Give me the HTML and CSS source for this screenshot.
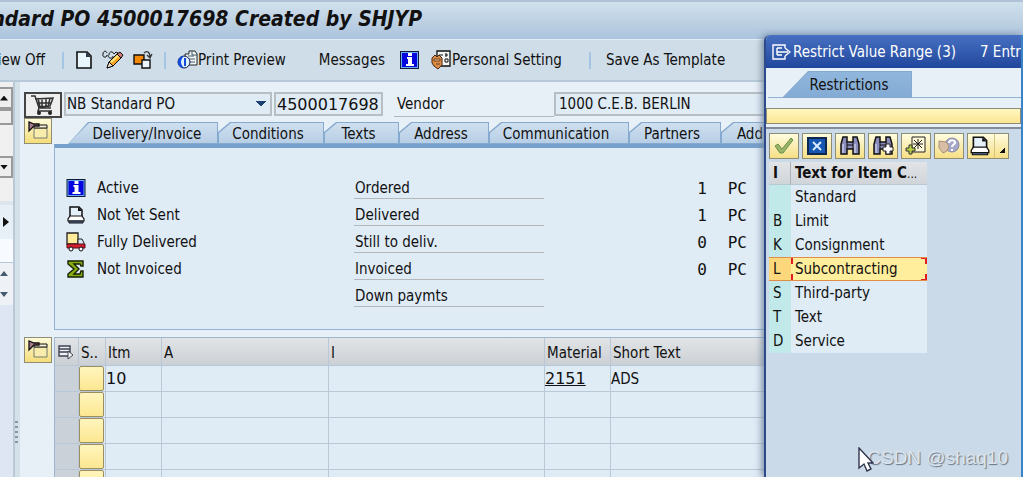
FILE: index.html
```html
<!DOCTYPE html>
<html lang="en">

<head>
    <meta charset="UTF-8">
    <meta name="viewport" content="width=device-width, initial-scale=1.0">
    <title>Standard PO 4500017698</title>
    <link rel="stylesheet" href="styles.css">
</head>

<body>
    <!-- shared icons -->
    <svg class="sprite" aria-hidden="true">
        <symbol id="icon-info" viewBox="0 0 19 18">
            <path d="M0 0h19v18H0z" fill="#111a3a" />
            <path d="M1 1h17v16H1z" fill="#6ab0ee" />
            <path d="M2 2h15v14H2z" fill="#0505dd" />
            <path d="M8 2h4v3H8zM7 6h5v7h2v2H6v-2h2V8H7z" fill="#fff" />
        </symbol>
        <symbol id="icon-printer" viewBox="0 0 20 20">
            <path d="M4 12V2h9l3 3v7" fill="#e4f1fa" stroke="#111" stroke-width="1.5" />
            <path d="M12 2v4h4" fill="#111" />
            <path d="M4 11h12l2 3v2H2v-2z" fill="#fff" stroke="#111" stroke-width="1.2" />
            <path d="M3 16h14v2H3z" fill="#53709c" stroke="#111" />
        </symbol>
        <symbol id="icon-collapse" viewBox="0 0 28 26">
            <path d="M10 10h13v10H10z" fill="#f8edac" stroke="#777a70" />
            <path d="M10 7h13v3H10z" fill="#f5f1db" stroke="#111" />
            <path d="M5 4v9l5-5h5V6h-5z" fill="#aa7a91" stroke="#111" stroke-width="1.3" />
        </symbol>
        <symbol id="icon-binoculars" viewBox="0 0 22 20">
            <path d="M4 1h4v5h6V1h4l2 7v10h-6v-5H8v5H2V8z" fill="#8b8dbd" stroke="#111" stroke-width="1.5" />
            <path d="M4 8v9M16 8v9" stroke="#c5c7e6" stroke-width="1.5" />
            <path d="M8 6v7M14 6v7M8 9h6" stroke="#111" />
        </symbol>
    </svg>

    <header class="title-bar">
        <h1>Standard PO 4500017698 Created by SHJYP</h1>
    </header>

    <div class="toolbar">
        <button class="tool document-overview">Document Overview Off</button>
        <span class="separator"></span>
        <div class="icon-tools">
            <button class="tool" aria-label="Create">
                <svg width="18" height="20" viewBox="0 0 18 20">
                    <path d="M2 2h10l4 4v12H2z" fill="#eaf6fd" stroke="#111" stroke-width="1.6" />
                    <path d="M11 2v5h5z" fill="#26384b" />
                </svg>
            </button>
            <button class="tool" aria-label="Display or change">
                <svg width="22" height="20" viewBox="0 0 22 20">
                    <path d="M1 4c0-3 3-4 4-1M7 5c0-4 4-4 5-1M1 4c-1 4 4 4 4 1M6 5c0 4 5 4 5 1M12 4l2-2 2 1" fill="none" stroke="#111" />
                    <path d="M5 18l2-6 9-9 4 4-9 9z" fill="#f6a524" stroke="#111" />
                    <path d="M9 12l8-7" stroke="#ffe67f" stroke-width="2" />
                    <path d="M5 18l2-6 4 4z" fill="#f2e0c8" stroke="#111" />
                    <path d="M15 4l4 4 2-3-3-3z" fill="#ce7975" stroke="#111" />
                </svg>
            </button>
            <button class="tool" aria-label="Other purchase order">
                <svg width="20" height="20" viewBox="0 0 20 20">
                    <path d="M1 5h10v9H1z" fill="#f58a08" stroke="#111" stroke-width="1.4" />
                    <path d="M9 10h8v8H9z" fill="#edf6fc" stroke="#111" stroke-width="1.4" />
                    <path d="M11 3c3-3 6-1 6 4M14 5l3 3 2-4" fill="none" stroke="#333" stroke-width="1.3" />
                </svg>
            </button>
        </div>
        <span class="separator"></span>
        <button class="tool print-preview">
            <svg width="21" height="20" viewBox="0 0 21 20">
                <path d="M8 4h4V1h6l2 3v11H9z" fill="#f0f7fb" stroke="#222" />
                <path d="M11 6h6M11 9h7M11 12h7M15 1v4h5" stroke="#455868" fill="none" />
                <circle cx="7" cy="12" r="6" fill="#dff1fc" stroke="#101852" />
                <path d="M7 6c-8 0-8 12 0 12-4-4-4-8 0-12zM7 8h2v8H7z" fill="#114be0" />
            </svg>Print Preview</button>
        <button class="tool messages">Messages
            <svg width="19" height="18"><use href="#icon-info" /></svg>
        </button>
        <button class="tool personal">
            <svg width="20" height="20" viewBox="0 0 20 20">
                <path d="M6 1h13v15H6z" fill="#f4f6f5" stroke="#111" stroke-width="1.3" />
                <path d="M8 5h4M14 5h3M15 3v4M14 9h3v3h-3z" fill="none" stroke="#111" />
                <path d="M1 8l3-3 2 2 2-2 3 3v7l-4 4-4-3-2-3z" fill="#d88d48" stroke="#4b250d" />
                <path d="M3 9h6v2H3zM5 14h4" fill="#f5c696" stroke="#72401c" />
            </svg>Personal Setting</button>
        <span class="separator"></span>
        <button class="tool">Save As Template</button>
    </div>

    <div class="workspace">
        <aside class="side-pane">
            <div class="scroll-box">
                <span class="scroll-button up"></span>
                <span class="scroll-thumb"></span>
                <span class="scroll-button down"></span>
            </div>
            <div class="side-heading"><span class="arrow-right"></span></div>
            <div class="side-field"></div>
            <div class="side-arrows"><span class="arrow-up"></span><span class="arrow-down"></span></div>
            <div class="side-rest"></div>
        </aside>
        <div class="splitter"><span class="grip"></span></div>

        <main class="order">
            <div class="order-head">
                <span class="cart">
                    <svg width="28" height="22" viewBox="0 0 28 22">
                        <path d="M2 2h4l4 12h12M6 5l18-1-3 8-12 1M8 9h14M9 4l2 9M13 4v9M17 4v9M21 4l-2 9" fill="none" stroke="#333" stroke-width="1.5" />
                        <path d="M10 14l-1 3h14" fill="none" stroke="#333" stroke-width="1.5" />
                        <circle cx="10" cy="19" r="2" fill="#222" />
                        <circle cx="21" cy="19" r="2" fill="#222" />
                    </svg>
                </span>
                <select class="field order-type" aria-label="Order type">
                    <option>NB Standard PO</option>
                </select>
                <input class="field order-number" value="4500017698" aria-label="Order number" readonly>
                <label class="vendor-label" for="vendor">Vendor</label>
                <input class="field vendor" id="vendor" value="1000 C.E.B. BERLIN" readonly>
            </div>

            <div class="section">
                <button class="collapse" aria-label="Collapse header"><svg width="28" height="26"><use href="#icon-collapse" /></svg></button>
                <div class="section-body">
                    <nav class="tabs">
                        <button class="tab tab-delivery"><span>Delivery/Invoice</span></button>
                        <button class="tab tab-conditions"><span>Conditions</span></button>
                        <button class="tab tab-texts"><span>Texts</span></button>
                        <button class="tab tab-address"><span>Address</span></button>
                        <button class="tab tab-communication"><span>Communication</span></button>
                        <button class="tab tab-partners"><span>Partners</span></button>
                        <button class="tab tab-additional"><span>Additional Data</span></button>
                    </nav>
                    <div class="panel">
                        <ul class="status-list">
                            <li><svg width="20" height="18"><use href="#icon-info" /></svg>Active</li>
                            <li><svg width="20" height="20"><use href="#icon-printer" /></svg>Not Yet Sent</li>
                            <li>
                                <svg width="20" height="20" viewBox="0 0 20 20">
                                    <path d="M1 1h11v11H1z" fill="#ffed9c" stroke="#222" stroke-width="1.3" />
                                    <path d="M12 7h4l2 4v4h-6z" fill="#d7e8f4" stroke="#222" />
                                    <path d="M1 12h18v4H1z" fill="#d51d31" stroke="#511" />
                                    <circle cx="5" cy="17" r="2" fill="#fff" stroke="#111" />
                                    <circle cx="15" cy="17" r="2" fill="#fff" stroke="#111" />
                                </svg>Fully Delivered
                            </li>
                            <li>
                                <svg width="20" height="20" viewBox="0 0 20 20">
                                    <path d="M2 2h15v5h-2l-1-2H8l5 5-5 5h6l1-3h2v6H2v-3l6-5-6-5z" fill="#86ad12" stroke="#182000" stroke-width="1.4" />
                                </svg>Not Invoiced
                            </li>
                        </ul>
                        <table class="quantities">
                            <tr><th>Ordered</th><td>1</td><td>PC</td></tr>
                            <tr><th>Delivered</th><td>1</td><td>PC</td></tr>
                            <tr><th>Still to deliv.</th><td>0</td><td>PC</td></tr>
                            <tr><th>Invoiced</th><td>0</td><td>PC</td></tr>
                            <tr><th>Down paymts</th><td></td><td></td></tr>
                        </table>
                    </div>
                </div>
            </div>

            <div class="section items-section">
                <button class="collapse" aria-label="Collapse items"><svg width="28" height="26"><use href="#icon-collapse" /></svg></button>
                <table class="items">
                    <colgroup>
                        <col class="col-select">
                        <col class="col-status">
                        <col class="col-item">
                        <col class="col-account">
                        <col class="col-category">
                        <col class="col-material">
                        <col>
                    </colgroup>
                    <thead>
                        <tr>
                            <th>
                                <svg width="16" height="16" viewBox="0 0 16 16">
                                    <path d="M1 2h11v10H1zM1 5h11M1 8h11" fill="#eef2f6" stroke="#3f4351" stroke-width="1.4" />
                                    <path d="M10 7l5 4-5 4z" fill="#fff" stroke="#3f4351" />
                                </svg>
                            </th>
                            <th>S..</th>
                            <th>Itm</th>
                            <th>A</th>
                            <th>I</th>
                            <th>Material</th>
                            <th>Short Text</th>
                        </tr>
                    </thead>
                    <tbody>
                        <tr><td></td><td><button class="cell-button" aria-label="Status"></button></td><td>10</td><td></td><td></td><td><a href="#">2151</a></td><td class="short-text">ADS</td></tr>
                        <tr><td></td><td><button class="cell-button" aria-label="Status"></button></td><td></td><td></td><td></td><td></td><td></td></tr>
                        <tr><td></td><td><button class="cell-button" aria-label="Status"></button></td><td></td><td></td><td></td><td></td><td></td></tr>
                        <tr><td></td><td><button class="cell-button" aria-label="Status"></button></td><td></td><td></td><td></td><td></td><td></td></tr>
                        <tr><td></td><td><button class="cell-button" aria-label="Status"></button></td><td></td><td></td><td></td><td></td><td></td></tr>
                    </tbody>
                </table>
            </div>
        </main>
    </div>

    <section class="dialog">
        <h2>
            <svg width="19" height="16" viewBox="0 0 19 16">
                <path d="M13 4V1H1v14h12v-3M5 4h5M5 11h5M5 4v7M5 8h11M13 4l5 4-5 4" fill="none" stroke="#fff" stroke-width="1.4" />
            </svg>
            <span>Restrict Value Range (3)</span>
            <span class="entries">7 Entries</span>
        </h2>
        <div class="dialog-tabs">
            <button class="tab dialog-tab"><span>Restrictions</span></button>
        </div>
        <div class="filter-bar"></div>
        <div class="results">
            <div class="result-tools">
                <button aria-label="Accept"><svg width="24" height="20" viewBox="0 0 24 20"><path d="M3 10l3-2 4 5L19 2l2 2L11 17H8z" fill="#9ab56a" stroke="#698e46" /></svg></button>
                <button aria-label="Cancel"><svg width="20" height="18" viewBox="0 0 20 18"><path d="M1 1h18v16H1z" fill="#1557b2" stroke="#102850" stroke-width="2" /><path d="M6 5l8 8M14 5l-8 8" stroke="#d9ebff" stroke-width="2" /></svg></button>
                <button aria-label="Find"><svg width="22" height="20"><use href="#icon-binoculars" /></svg></button>
                <button aria-label="Find next"><svg width="22" height="20"><use href="#icon-binoculars" /><path d="M14 8h4v3h3v4h-3v3h-4v-3h-3v-4h3z" fill="#fff" stroke="#222" /></svg></button>
                <button aria-label="Insert in personal list"><svg width="22" height="20" viewBox="0 0 22 20"><path d="M7 1h13v15H7z" fill="#fff9d9" stroke="#222" /><path d="M13 3v10M8 8h10M9 4l8 8M17 4l-8 8" stroke="#222" /><path d="M4 9h3v3h3v3H7v3H4v-3H1v-3h3z" fill="#b7ce42" stroke="#333" /></svg></button>
                <button aria-label="Help"><svg width="24" height="20" viewBox="0 0 24 20"><circle cx="15" cy="9" r="7" fill="#a5a8cb" stroke="#8588a5" /><path d="M12 7c0-4 7-3 6 0-1 2-3 2-3 4M15 13v2" fill="none" stroke="#fff" stroke-width="2" /><path d="M2 5l7 1 3 4-2 5-4 2-4-5z" fill="#d8bea4" stroke="#aa927c" /></svg></button>
                <button class="print" aria-label="Print"><svg width="24" height="22" viewBox="0 0 20 20"><use href="#icon-printer" /></svg><span></span></button>
            </div>
            <table class="values">
                <thead>
                    <tr><th>I</th><th>Text for Item C<small>...</small></th></tr>
                </thead>
                <tbody>
                    <tr><td></td><td>Standard</td></tr>
                    <tr><td>B</td><td>Limit</td></tr>
                    <tr><td>K</td><td>Consignment</td></tr>
                    <tr class="selected"><td>L</td><td>Subcontracting</td></tr>
                    <tr><td>S</td><td>Third-party</td></tr>
                    <tr><td>T</td><td>Text</td></tr>
                    <tr><td>D</td><td>Service</td></tr>
                </tbody>
            </table>
        </div>
    </section>

    <div class="watermark">CSDN @shaq10</div>
    <svg class="pointer" width="16" height="26" viewBox="0 0 16 26">
        <path d="M1 1v20l5-4 3 7 4-2-3-6h5z" fill="#fff" stroke="#30364d" stroke-width="1.4" />
    </svg>
</body>

</html>
```
FILE: styles.css
```css
* {
    box-sizing: border-box;
}

html,
body {
    height: 100%;
    margin: 0;
}

body {
    display: flex;
    flex-direction: column;
    overflow: hidden;
    position: relative;
    background-color: #e7eff7;
    color: #111;
    font: 15px/20px "DejaVu Sans Condensed", "DejaVu Sans", sans-serif;
}

button,
input,
select {
    font: inherit;
    color: inherit;
}

button {
    padding: 0;
    border: 0;
    background: none;
    white-space: nowrap;
}

svg {
    flex: none;
}

table {
    border-spacing: 0;
}

th {
    font-weight: normal;
    text-align: left;
}

.sprite {
    position: absolute;
    width: 0;
    height: 0;
}

.title-bar {
    flex: none;
    display: flex;
    align-items: center;
    height: 39px;
    padding-bottom: 4px;
    border-top: 2px solid #b0c2d5;
    background: linear-gradient(#d0e0ed, #bfd2e3 50%, #abc3dd);
    overflow: hidden;
}

h1 {
    margin: 0 0 0 -44px;
    font-size: 21px;
    line-height: 28px;
    font-style: italic;
    white-space: nowrap;
}

/* application toolbar */
.toolbar {
    flex: none;
    display: flex;
    align-items: center;
    height: 43px;
    border-top: 1px solid #e3edf5;
    border-bottom: 2px solid #b7c9d8;
    background-color: #cfdde8;
    overflow: hidden;
}

.tool {
    flex: none;
    display: flex;
    align-items: center;
}

.document-overview {
    width: 45px;
    justify-content: flex-end;
}

.separator {
    flex: none;
    width: 2px;
    height: 17px;
    margin: 0 11px 0 17px;
    background-color: #a5c5e5;
}

.icon-tools {
    flex: none;
    display: flex;
    gap: 9px;
    margin-right: -6px;
}

.print-preview {
    margin-right: 33px;
}

.messages {
    gap: 15px;
    margin-right: 12px;
}

.personal {
    gap: 1px;
    margin-right: 10px;
}

.personal + .separator {
    margin-right: 15px;
}

.workspace {
    flex: 1;
    min-height: 0;
    display: flex;
}

/* what is left of the document overview */
.side-pane {
    flex: none;
    display: flex;
    flex-direction: column;
    width: 15px;
    border-right: 2px solid #b9c9d7;
}

.scroll-box {
    display: flex;
    flex-direction: column;
    height: 123px;
    padding-top: 5px;
    background-color: #f0f0f0;
    border-bottom: 4px solid #dce5ec;
}

.scroll-button,
.scroll-thumb {
    display: flex;
    align-items: center;
    height: 22px;
    border: 2px solid #999;
    border-left: 0;
    background-color: #eee;
}

.scroll-thumb {
    height: 16px;
}

.scroll-button.down {
    margin-top: 31px;
}

.scroll-button::before,
.arrow-up,
.arrow-down {
    content: "";
    width: 8px;
    height: 5px;
    background-color: #111;
    clip-path: polygon(0 100%, 50% 0, 100% 100%);
}

.scroll-button.down::before,
.arrow-down {
    clip-path: polygon(0 0, 100% 0, 50% 100%);
}

.side-heading {
    display: flex;
    align-items: center;
    height: 34px;
}

.arrow-right {
    width: 6px;
    height: 10px;
    margin-left: 3px;
    background-color: #111;
    clip-path: polygon(0 0, 100% 50%, 0 100%);
}

.side-field {
    height: 24px;
    background-color: #f7faff;
    border-bottom: 1px solid #b8c8d8;
}

.side-arrows {
    display: flex;
    flex-direction: column;
    justify-content: space-around;
    height: 42px;
    background-color: #eef2f6;
}

.side-arrows span {
    background-color: #455b6b;
}

.side-rest {
    flex: 1;
    background-color: #dde6f2;
}

.splitter {
    flex: none;
    display: flex;
    flex-direction: column;
    justify-content: flex-end;
    width: 5px;
    padding-bottom: 32px;
    background-color: #d5e1e9;
}

.grip {
    width: 3px;
    height: 24px;
    background: repeating-linear-gradient(#8798a8 0 2px, transparent 2px 5px);
}

.order {
    flex: 1;
    min-width: 0;
    padding: 10px 0 0 4px;
}

.order-head {
    display: flex;
    height: 26px;
    white-space: nowrap;
}

.cart {
    flex: none;
    display: flex;
    justify-content: center;
    align-items: center;
    width: 38px;
    height: 26px;
    margin-right: 2px;
    border: 2px solid #444;
    background-color: #eee;
}

.field {
    flex: none;
    height: 24px;
    padding: 0 3px;
    border: 2px solid #b7bec4;
    border-radius: 0;
    background-color: #dfebf5;
}

.order-type {
    appearance: none;
    width: 208px;
    margin-right: 2px;
    padding: 0 1px;
    background-image: linear-gradient(to bottom left, #1d4272 50%, transparent 50%), linear-gradient(to bottom right, #1d4272 50%, transparent 50%);
    background-size: 5px 6px;
    background-position: right 9px top 7px, right 4px top 7px;
    background-repeat: no-repeat;
}

.order-number {
    width: 109px;
    margin-right: 11px;
    padding: 0 1px;
    font-family: "DejaVu Sans", sans-serif;
    font-size: 16px;
}

.vendor-label {
    flex: none;
    width: 160px;
    height: 25px;
    padding: 2px 3px;
    border-bottom: 1px solid #b5b8ba;
}

.vendor {
    flex: 1;
}

.section {
    display: flex;
}

.collapse {
    flex: none;
    width: 28px;
    height: 26px;
    border: 1px solid #8f8e75;
    background: linear-gradient(#fffbd9, #f5dd79);
    overflow: hidden;
}

.collapse svg {
    display: block;
    margin: -1px;
}

.section-body {
    flex: 1;
    min-width: 0;
    margin-left: 2px;
}

.tabs {
    display: flex;
    height: 26px;
    padding: 4px 0 0 14px;
    overflow: hidden;
}

/* outline colour on the button, fill on the inset layer */
.tab {
    flex: none;
    position: relative;
    height: 22px;
    padding-top: 2px;
    background-color: #86a9cf;
    clip-path: polygon(0 100%, 20px 0, 100% 0, 100% 100%);
}

.tab::before {
    content: "";
    position: absolute;
    inset: 1px;
    background: linear-gradient(#cfe0ef, #b7cee5);
    clip-path: polygon(0 100%, 20px 0, 100% 0, 100% 100%);
}

.tab span {
    position: relative;
}

.tab-delivery {
    width: 150px;
    padding-left: 8px;
}

.tab-conditions {
    width: 106px;
    padding-right: 6px;
}

.tab-texts {
    width: 75px;
    padding-right: 6px;
}

.tab-address {
    width: 90px;
    padding-right: 6px;
}

.tab-communication {
    width: 140px;
    padding-right: 6px;
}

.tab-partners {
    width: 92px;
    padding-right: 6px;
}

.tab-additional {
    width: 136px;
}

.tab + .tab {
    clip-path: polygon(0 100%, 0 10px, 12px 0, 100% 0, 100% 100%);
}

.tab + .tab::before {
    clip-path: polygon(0 100%, 0 10px, 12px 0, 100% 0, 100% 100%);
}

.panel {
    display: flex;
    height: 186px;
    padding-top: 24px;
    border: 1px solid #91b3d5;
    border-top: 4px solid #779fcc;
    background-color: #dfebf5;
}

.status-list {
    width: 299px;
    margin: 2px 0 0;
    padding: 0 0 0 11px;
    list-style: none;
}

.status-list li {
    display: flex;
    align-items: center;
    gap: 11px;
    height: 27px;
}

.quantities {
    align-self: flex-start;
    table-layout: fixed;
    width: 394px;
}

.quantities th,
.quantities td {
    height: 27px;
    padding: 0 1px;
    vertical-align: bottom;
}

.quantities th {
    width: 190px;
    border-bottom: 1px solid #b5b8ba;
}

.quantities td {
    width: 164px;
    text-align: right;
    font-family: "DejaVu Sans Mono", monospace;
    font-size: 16px;
}

.quantities td:last-child {
    width: 40px;
}

.items-section {
    margin-top: 7px;
}

.items {
    flex: 1;
    min-width: 0;
    table-layout: fixed;
    margin-left: 2px;
    border-top: 1px solid #9db6d0;
    border-left: 1px solid #9db6d0;
    background-color: #dfebf5;
}

.col-select {
    width: 24px;
}

.col-status {
    width: 27px;
}

.col-item {
    width: 56px;
}

.col-account {
    width: 167px;
}

.col-category {
    width: 216px;
}

.col-material {
    width: 66px;
}

.items th,
.items td {
    height: 26px;
    padding: 0 2px;
    border-right: 1px solid #b9c8d6;
    border-bottom: 1px solid #b9c8d6;
    white-space: nowrap;
}

.items th {
    height: 28px;
    padding-top: 3px;
    background: linear-gradient(#e2e4e6, #cbd0d5);
}

.items th:first-child {
    padding: 3px;
}

.items th svg {
    display: block;
}

.items td {
    padding: 0;
    font-family: "DejaVu Sans", sans-serif;
    font-size: 16px;
}

.items td:first-child {
    background-color: #cbd1d8;
}

.items .short-text {
    font: inherit;
}

.items a {
    color: inherit;
}

.cell-button {
    display: block;
    width: 25px;
    height: 25px;
    border: 1px solid #9b8e60;
    border-radius: 2px;
    background: linear-gradient(#fff5bd, #fce791);
}

/* search help, lies over the order */
.dialog {
    position: absolute;
    top: 35px;
    left: 764px;
    right: 0;
    bottom: 0;
    border-left: 2px solid #2d4b8b;
    border-right: 2px solid #3b82c7;
    border-radius: 6px 0 0 0;
    background-color: #e7eff7;
    box-shadow: -2px 0 7px #72879d;
    overflow: hidden;
    white-space: nowrap;
}

h2 {
    display: flex;
    align-items: center;
    gap: 2px;
    height: 33px;
    margin: 0;
    padding-left: 6px;
    background: linear-gradient(#4770c2, #20479c);
    color: #fff;
    font-size: 15px;
    font-weight: normal;
}

.entries {
    margin-left: 22px;
}

.dialog-tabs {
    height: 30px;
    margin-left: 2px;
    padding: 3px 0 0 14px;
    border-bottom: 1px solid #91b3d5;
}

.dialog-tab {
    width: 130px;
    height: 27px;
    padding: 0 0 0 4px;
    clip-path: polygon(0 100%, 26px 0, 100% 0, 100% 100%);
}

.dialog-tab::before {
    background: linear-gradient(#90b6dc, #84abd4);
    clip-path: polygon(0 100%, 26px 0, 100% 0, 100% 100%);
}

.filter-bar {
    height: 16px;
    margin-top: 10px;
    border: 1px solid #8d8b7c;
    background: linear-gradient(#fff7c1, #fbe592);
}

.results {
    height: 100%;
    margin-top: 3px;
    border-top: 2px solid #858e98;
    background-color: #cbdae9;
}

.result-tools {
    display: flex;
    gap: 3px;
    height: 33px;
    padding: 4px 3px 3px;
}

.result-tools button {
    display: flex;
    justify-content: center;
    align-items: center;
    width: 30px;
    height: 26px;
    border: 1px solid #8f8e75;
    background: linear-gradient(#fffce0, #f6df85);
}

.result-tools .print {
    width: 42px;
    justify-content: space-between;
}

.print span {
    width: 14px;
    height: 24px;
    border-left: 1px solid #d5c67f;
    background: linear-gradient(to bottom right, transparent 50%, #111 50%) 5px 14px / 5px 5px no-repeat;
}

.values {
    width: 158px;
    margin-left: 3px;
}

.values th {
    height: 23px;
    padding: 0 4px;
    background: linear-gradient(#e2e4e6, #d0d5da);
    border-bottom: 1px solid #b9c8d6;
    font-weight: bold;
}

.values th:first-child,
.values td:first-child {
    width: 22px;
}

.values th:first-child {
    border-right: 1px solid #aab1b8;
}

.values small {
    font-size: 12px;
    font-weight: normal;
}

.values td {
    height: 24px;
    padding: 0 4px;
    background-color: #dfebf5;
}

.values td:first-child {
    background-color: #c2e9e9;
}

.values .selected td {
    border-top: 1px solid #e18b46;
    border-bottom: 1px solid #e18b46;
    background-color: #ffee9c;
}

.values .selected td:first-child {
    background-color: #fcd77b;
}

/* cursor frame: red corners only */
.values .selected td:last-child {
    background:
        linear-gradient(#e31d25, #e31d25) left top / 2px 6px,
        linear-gradient(#e31d25, #e31d25) right top / 2px 6px,
        linear-gradient(#e31d25, #e31d25) left bottom / 2px 6px,
        linear-gradient(#e31d25, #e31d25) right bottom / 2px 6px,
        linear-gradient(#e31d25, #e31d25) right top / 6px 1px,
        linear-gradient(#e31d25, #e31d25) right bottom / 6px 1px,
        #ffee9c;
    background-repeat: no-repeat;
}

.watermark {
    position: absolute;
    right: 15px;
    bottom: 7px;
    color: #dce5ee;
    font: 19px/24px "Liberation Sans", sans-serif;
    text-shadow: 1px 1px 1px #66727e;
}

.pointer {
    position: absolute;
    left: 858px;
    bottom: 4px;
}
```
